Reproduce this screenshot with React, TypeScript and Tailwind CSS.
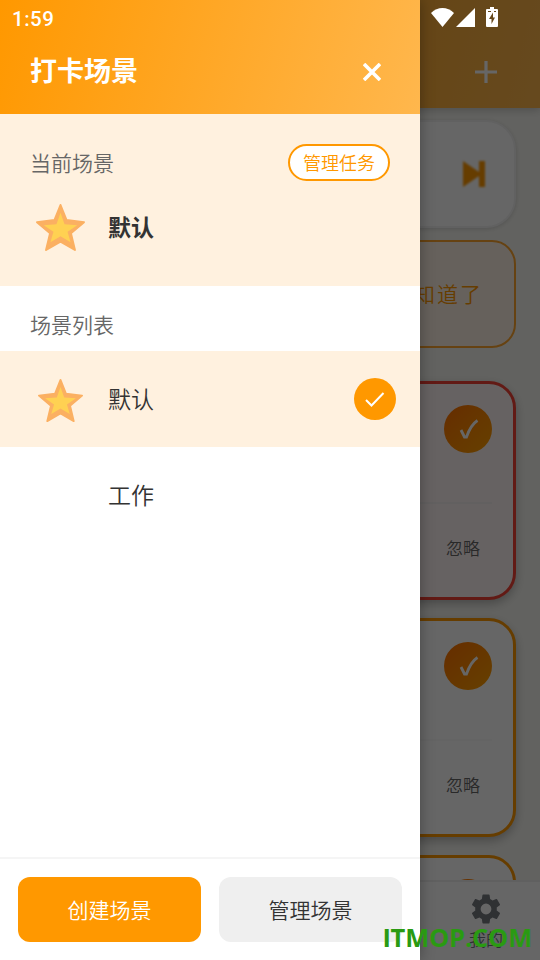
import React from 'react';

const Star: React.FC<{ className: string }> = ({ className }) => (
  <svg className={className} viewBox="0 0 152 146">
    <path
      d="M76 6 94 51 146 57 107 90 119 140 76 115 33 140 45 90 6 57 58 51Z"
      fill="#fbb062"
      stroke="#fbb062"
      strokeWidth="6"
      strokeLinejoin="round"
    />
    <path d="M76 29 88 63 126 66 97 86 106 117 76 99 46 117 55 86 26 66 64 63Z" fill="#ffd152" />
  </svg>
);

const StatusBar: React.FC = () => (
  <div className="absolute inset-x-0 top-0 h-9 flex items-center justify-between pl-3 pr-[42px] pt-0.5 text-white">
    <span className="font-['Roboto',sans-serif] text-[20.5px] font-medium leading-none tracking-[0.5px]">1:59</span>
    <div className="flex items-center -mt-1">
      <svg className="w-[23px] h-[19px]" viewBox="0 0 23 19" fill="currentColor">
        <path d="M11.5 19 0 5C3.5 1.8 7.3 0 11.5 0S19.500 1.800 23 5Z" />
      </svg>
      <svg className="w-[19px] h-[19px] ml-[2px]" viewBox="0 0 19 19" fill="currentColor">
        <path d="M19 0v19H0Z" />
      </svg>
      <svg className="w-3 h-5 ml-[11px]" viewBox="0 0 12 20">
        <path d="M4 0h4v2h3a1 1 0 0 1 1 1v16a1 1 0 0 1-1 1H1a1 1 0 0 1-1-1V3a1 1 0 0 1 1-1h3Z" fill="#fff" />
        <path d="M7 5.500 3 12h2.500v5L9 10.500H7ZM2 4h3v1H2ZM8 4h2v1H8Z" fill="#66471b" />
      </svg>
    </div>
  </div>
);

const TaskCard: React.FC<{ urgent?: boolean }> = ({ urgent }) => (
  <div
    className={`h-[219px] shrink-0 rounded-[27px] border-[3px] px-[21px] pt-[21px] shadow-[0_4px_10px_rgba(0,0,0,0.25)] ${
      urgent ? 'bg-[#fff5f5] border-[#f44336]' : 'bg-white border-[#ff9800]'
    }`}
  >
    <div className="flex justify-end h-[97px]">
      <div className="w-12 h-12 rounded-full bg-linear-to-br from-[#ff7000] to-[#ffa000] flex items-center justify-center">
        <svg className="w-5 h-5 ml-0.5" viewBox="0 0 20 20" fill="none" stroke="#fff" strokeWidth="2.800">
          <path d="M2 11 5.500 18H7.500C10 11 13 5 18.500 1.500" />
        </svg>
      </div>
    </div>
    <div className={`border-t-2 flex justify-end pt-[31px] pr-3 ${urgent ? 'border-[#f5f0f0]' : 'border-[#fafafa]'}`}>
      <span className="text-[17px] leading-[26px] font-[350] text-[#666]">忽略</span>
    </div>
  </div>
);

const HomePage: React.FC = () => (
  <div className="h-[960px] flex flex-col bg-[#f5f5f0]">
    <header className="h-[108px] shrink-0 flex items-end justify-end pr-[43px] pb-[25px] bg-linear-[105deg] from-[#ff9800] to-[#ffb74d] shadow-[0_2px_8px_rgba(0,0,0,0.2)]">
      <svg className="w-[22px] h-[22px]" viewBox="0 0 22 22" stroke="#fff" strokeWidth="3.200">
        <path d="M11 0v22M0 11h22" />
      </svg>
    </header>
    <main className="flex-1 min-h-0 overflow-hidden flex flex-col px-6 pt-3">
      <div className="h-[108px] shrink-0 rounded-[30px] bg-white border-2 border-[#f3f3f3] flex items-center justify-end pr-7 shadow-[0_1px_4px_rgba(0,0,0,0.15)]">
        <svg className="w-6 h-7 blur-[0.8px]" viewBox="0 0 24 28" fill="#ff9800">
          <path d="M1 1 17 12V1h6v26h-6V16L1 27Z" />
        </svg>
      </div>
      <div className="h-[108px] shrink-0 mt-3 rounded-[24px] bg-[#fff3e6] border-2 border-[#ffa52d] flex items-center justify-end pr-[31px]">
        <span className="text-[21px] tracking-[2px] font-[350] text-[#ff9800]">知道了</span>
      </div>
      <div className="mt-[33px] flex flex-col gap-[18px]">
        <TaskCard urgent />
        <TaskCard />
        {/* Top of the next card, cut by the tab bar */}
        <div className="h-10 shrink-0 rounded-t-[27px] border-[3px] border-b-0 border-[#ff9800] bg-white px-[21px] pt-[21px] flex justify-end">
          <div className="w-12 h-12 shrink-0 rounded-full bg-linear-to-br from-[#ff7000] to-[#ffa000]" />
        </div>
      </div>
    </main>
    <nav className="h-20 shrink-0 bg-white border-t-2 border-[#f0f0f0] flex justify-end">
      <div className="w-[108px] flex flex-col items-center pt-[10px]">
        <svg className="w-9 h-9 -my-px" viewBox="0 0 24 24" fill="#757a80">
          <path d="M19.140 12.940c.04-.3.060-.61.060-.94 0-.32-.02-.64-.07-.94l2.030-1.580a.49.49 0 0 0 .12-.61l-1.920-3.320a.488.488 0 0 0-.59-.22l-2.390.96c-.5-.38-1.030-.7-1.620-.94l-.36-2.540a.484.484 0 0 0-.48-.41h-3.840c-.24 0-.43.17-.47.41l-.36 2.540c-.59.24-1.130.57-1.620.94l-2.390-.96c-.22-.08-.47 0-.59.22L2.740 8.870c-.12.21-.08.47.12.61l2.030 1.580c-.05.3-.09.63-.09.94s.02.64.07.94l-2.030 1.580a.49.49 0 0 0-.12.61l1.920 3.320c.12.22.37.29.59.22l2.390-.96c.5.38 1.030.7 1.620.94l.36 2.540c.05.24.24.41.48.41h3.840c.24 0 .44-.17.47-.41l.36-2.540c.59-.24 1.130-.56 1.620-.94l2.390.96c.22.08.47 0 .59-.22l1.920-3.320c.12-.22.07-.47-.12-.61ZM12 15.600a3.600 3.600 0 1 1 0-7.200 3.600 3.600 0 0 1 0 7.200Z" />
        </svg>
        <span className="mt-0.5 text-[17px] leading-[22px] font-[350] text-[#707880]">我的</span>
      </div>
    </nav>
  </div>
);

const SceneDrawer: React.FC = () => (
  <aside className="absolute left-0 top-0 w-[420px] h-[960px] flex flex-col bg-white font-[350] shadow-[2px_0_12px_rgba(0,0,0,0.25)]">
    <header className="h-[114px] shrink-0 flex items-end justify-between px-[30px] pb-[24px] bg-linear-[105deg] from-[#ff9800] to-[#ffb74d] text-white">
      <h1 className="text-[27px] leading-10 font-bold">打卡场景</h1>
      <svg className="w-[18px] h-[18px] mr-[9px] mb-[9px]" viewBox="0 0 18 18" stroke="currentColor" strokeWidth="3.600">
        <path d="M1 1 17 17M17 1 1 17" />
      </svg>
    </header>

    {/* Current scene */}
    <section className="h-[172px] shrink-0 bg-[#fff1df] px-[30px] pt-[30px]">
      <div className="flex items-center justify-between">
        <span className="text-[21px] text-[#666]">当前场景</span>
        <button className="w-[102px] h-[37px] pb-px rounded-full border-2 border-[#ff9800] bg-white text-[18px] leading-none text-[#ff9800]">
          管理任务
        </button>
      </div>
      <div className="flex items-center mt-[22px]">
        <div className="w-[60px] flex justify-center">
          <Star className="w-[51px] h-[49px]" />
        </div>
        <span className="ml-[18px] -mt-1 text-[23px] leading-[34px] font-bold text-[#333]">默认</span>
      </div>
    </section>

    {/* Scene list */}
    <section className="flex-1">
      <h2 className="h-[65px] pl-[30px] pt-[22px] text-[21px] leading-8 text-[#666]">场景列表</h2>
      <div className="h-24 flex items-center bg-[#fff1df] pl-[30px] pr-6">
        <div className="w-[60px] flex justify-center">
          <Star className="w-[47px] h-[45px] mt-0.5" />
        </div>
        <span className="ml-[18px] -mt-0.5 text-[23px] text-[#333]">默认</span>
        <div className="ml-auto w-[42px] h-[42px] rounded-full bg-[#ff9800] flex items-center justify-center">
          <svg className="w-5 h-5" viewBox="0 0 20 20" fill="none" stroke="#fff" strokeWidth="2">
            <path d="M1 11 6.500 16.500 18.500 4" />
          </svg>
        </div>
      </div>
      <div className="h-24 flex items-center pl-[108px]">
        <span className="-mt-0.5 text-[23px] text-[#333]">工作</span>
      </div>
    </section>

    <footer className="h-[103px] shrink-0 border-t-2 border-[#f5f5f5] flex gap-[18px] px-[18px] pt-[18px]">
      <button className="flex-1 h-[65px] rounded-xl bg-[#ff9800] text-[21px] text-white">创建场景</button>
      <button className="flex-1 h-[65px] rounded-xl bg-[#efefef] text-[21px] text-[#333]">管理场景</button>
    </footer>
  </aside>
);

const App: React.FC = () => {
  return (
    <div className="relative w-[540px] h-[960px] overflow-hidden font-['Noto_Sans_CJK_SC',sans-serif]">
      <HomePage />
      <div className="absolute inset-0 bg-black/60" />
      <SceneDrawer />
      <StatusBar />
      <span className="absolute right-[8px] bottom-[5px] font-['Open_Sans',sans-serif] text-[25.5px] leading-9 font-bold tracking-[-0.2px] text-[#2a9a12]">
        ITMOP.COM
      </span>
    </div>
  );
};

export default App;
